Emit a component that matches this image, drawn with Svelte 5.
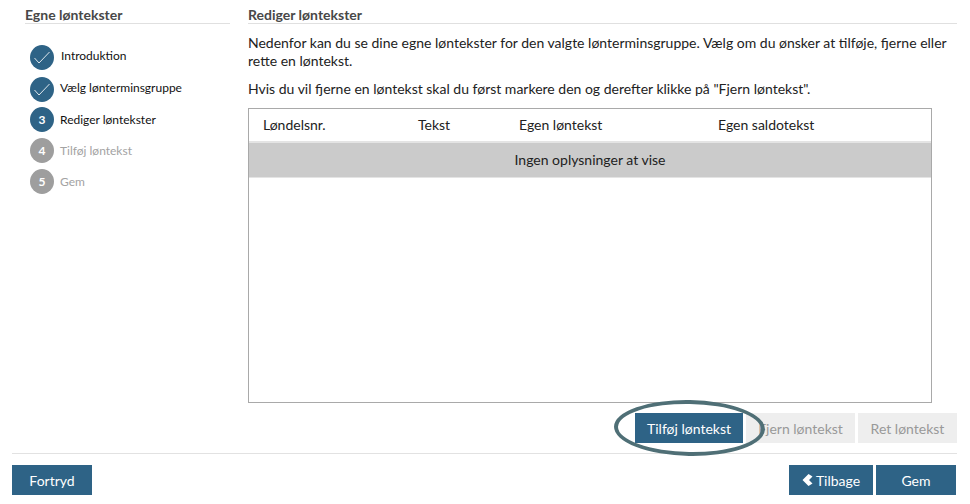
<script>
	const steps = [
		{ label: 'Introduktion', state: 'done' },
		{ label: 'Vælg lønterminsgruppe', state: 'done' },
		{ num: 3, label: 'Rediger løntekster', state: 'active' },
		{ num: 4, label: 'Tilføj løntekst', state: 'todo' },
		{ num: 5, label: 'Gem', state: 'todo' }
	];
</script>

<div class="page">
	<div class="main">
		<aside class="side">
			<h2>Egne løntekster</h2>
			<ol class="steps">
				{#each steps as step}
					<li class="step {step.state}">
						<span class="dot">
							{#if step.state === 'done'}
								<svg width="16" height="13" viewBox="0 0 16 13">
									<path d="M0.5 7 L5 12 L15.5 1" fill="none" stroke="#dfe7ec" stroke-width="1" />
								</svg>
							{:else}
								{step.num}
							{/if}
						</span>
						<span class="label">{step.label}</span>
					</li>
				{/each}
			</ol>
		</aside>

		<section class="content">
			<h2>Rediger løntekster</h2>
			<p class="first">
				Nedenfor kan du se dine egne løntekster for den valgte lønterminsgruppe. Vælg om du ønsker at tilføje, fjerne eller rette en løntekst.
			</p>
			<p class="second">
				Hvis du vil fjerne en løntekst skal du først markere den og derefter klikke på "Fjern løntekst".
			</p>

			<div class="table">
				<div class="thead">
					<span class="c1">Løndelsnr.</span>
					<span class="c2">Tekst</span>
					<span class="c3">Egen løntekst</span>
					<span class="c4">Egen saldotekst</span>
				</div>
				<div class="empty">Ingen oplysninger at vise</div>
			</div>

			<div class="actions">
				<button class="btn add">
					Tilføj løntekst
					<span class="ring"></span>
				</button>
				<button class="btn off remove">Fjern løntekst</button>
				<button class="btn off">Ret løntekst</button>
			</div>
		</section>
	</div>

	<div class="footer">
		<button class="btn cancel">Fortryd</button>
		<div class="right">
			<button class="btn back">
				<svg width="11" height="12" viewBox="0 0 11 12">
					<path d="M6.5 0 L10.5 2.5 L7 6 L10.5 9.5 L6.5 12 L0.5 6 Z" fill="#fff" />
				</svg>
				Tilbage
			</button>
			<button class="btn save">Gem</button>
		</div>
	</div>
</div>

<style>
	:global(body) {
		background: #fff;
	}

	.page {
		width: 970px;
		height: 504px;
		box-sizing: border-box;
		padding: 8px 13px 0 12px;
		font-family: Lato, sans-serif;
		color: #222;
		font-size: 14px;
	}

	.main {
		display: flex;
		height: 445px;
		border-bottom: 1px solid #e2e2e2;
	}

	.side {
		width: 205px;
		margin-left: 13px;
		margin-right: 18px;
	}

	.content {
		flex: 1;
		min-width: 0;
	}

	h2 {
		margin: 0;
		height: 15px;
		line-height: 14px;
		font-size: 14px;
		font-weight: 700;
		color: #484848;
		border-bottom: 1px solid #e0e0e0;
	}

	.steps {
		list-style: none;
		margin: 21px 0 0 5px;
		padding: 0;
		display: flex;
		flex-direction: column;
	}

	.step {
		display: flex;
		align-items: flex-start;
		gap: 6px;
		height: 31px;
		font-size: 12px;
	}

	.step:first-child {
		height: 32px;
	}

	.step:nth-child(2) {
		height: 30px;
	}

	.step.done:first-child .label {
		margin-left: 1px;
	}

	.dot {
		width: 24px;
		height: 25px;
		border-radius: 50%;
		background: #2e6386;
		color: #fff;
		font-weight: 700;
		font-size: 12px;
		display: flex;
		align-items: center;
		justify-content: center;
		flex: none;
	}

	.label {
		line-height: 25px;
		color: #111;
	}

	.done .label {
		line-height: 22px;
	}

	.todo .dot {
		background: #9e9e9e;
	}

	.todo .label {
		color: #a3a3a3;
	}

	p {
		margin: 0;
		line-height: 18px;
		font-size: 14px;
		color: #222;
	}

	.first {
		margin-top: 10px;
		width: 700px;
	}

	.second {
		margin-top: 10px;
	}

	.table {
		margin-top: 10px;
		width: 684px;
		height: 295px;
		box-sizing: border-box;
		border: 1px solid #a9a9a9;
	}

	.thead {
		display: flex;
		height: 34px;
		box-sizing: border-box;
		align-items: center;
		font-size: 14px;
		padding-bottom: 1px;
		border-bottom: 2px solid #e4e4e4;
	}

	.c1 {
		margin-left: 14px;
		width: 155px;
	}

	.c2 {
		width: 101px;
	}

	.c3 {
		width: 199px;
	}

	.empty {
		height: 35px;
		box-sizing: border-box;
		background: #cbcbcb;
		border-bottom: 1px solid #e4e4e4;
		padding-bottom: 1px;
		display: flex;
		align-items: center;
		justify-content: center;
		font-size: 14px;
	}

	.actions {
		display: flex;
		justify-content: flex-end;
		gap: 3px;
		margin-top: 10px;
	}

	.btn {
		height: 30px;
		border: 0;
		padding: 0;
		font-family: inherit;
		font-size: 14px;
		color: #fff;
		background: #2e6386;
	}

	.add {
		position: relative;
		width: 108px;
	}

	.off {
		background: #eee;
		color: #999;
		width: 99px;
	}

	.remove {
		width: 109px;
	}

	/* highlight drawn over the button */
	.ring {
		position: absolute;
		left: -21px;
		top: -13px;
		width: 151px;
		height: 56px;
		box-sizing: border-box;
		border: 4px solid #4f6f76;
		border-radius: 50%;
		transform: rotate(1deg);
	}

	.footer {
		display: flex;
		justify-content: space-between;
		margin-top: 11px;
	}

	.right {
		display: flex;
		gap: 3px;
		margin-right: 1px;
	}

	.cancel {
		width: 80px;
	}

	.back {
		width: 84px;
		display: flex;
		align-items: center;
		justify-content: center;
		gap: 3px;
	}

	.save {
		width: 80px;
	}
</style>
